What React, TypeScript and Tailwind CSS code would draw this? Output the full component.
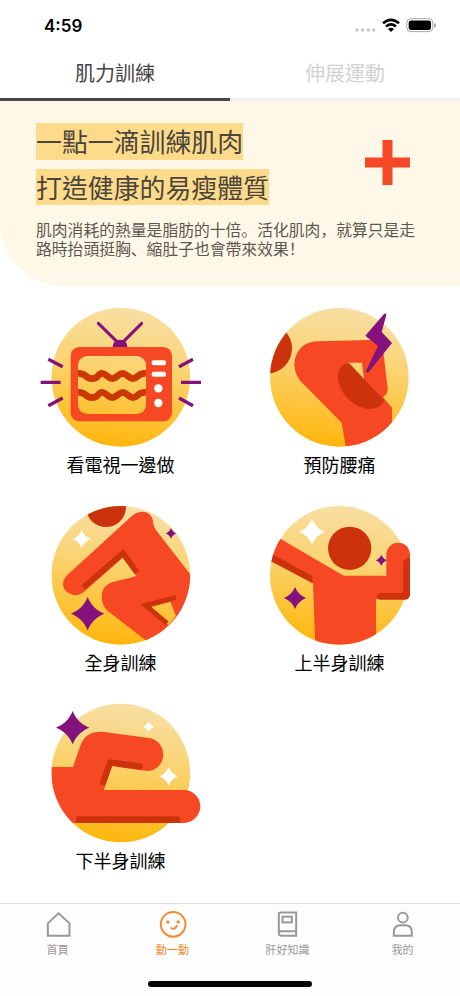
import type { ReactNode } from 'react'

const RED = '#f64822'
const DARK = '#cc330c'
const PURPLE = '#85117c'

type StarProps = { x: number; y: number; r: number; fill: string }

function Star({ x, y, r, fill }: StarProps) {
  return (
    <path
      transform={`translate(${x} ${y}) scale(${r})`}
      fill={fill}
      d="M0 -1C.18 -.55 .5 -.2 1 0C.5 .2 .18 .55 0 1C-.18 .55 -.5 .2 -1 0C-.5 -.2 -.18 -.55 0 -1Z"
    />
  )
}

type SceneProps = {
  id: string
  viewBox: string
  cx: number
  cy: number
  extra?: ReactNode
  clipped?: ReactNode
  children?: ReactNode
}

function Scene({ id, viewBox, cx, cy, extra, clipped, children }: SceneProps) {
  return (
    <svg width="180" height="150" viewBox={viewBox} className="block overflow-visible" fill="none">
      <defs>
        <linearGradient id={`${id}-sun`} gradientUnits="userSpaceOnUse" x1={cx + 25} y1={cy - 208} x2={cx - 25} y2={cy + 208}>
          <stop offset="0" stopColor="#f7dfa4" />
          <stop offset="0.4" stopColor="#fad474" />
          <stop offset="1" stopColor="#ffb60c" />
        </linearGradient>
        <clipPath id={`${id}-clip`}>
          <circle cx={cx} cy={cy} r="208" />
          {extra}
        </clipPath>
      </defs>
      <circle cx={cx} cy={cy} r="208" fill={`url(#${id}-sun)`} />
      <g clipPath={`url(#${id}-clip)`}>{clipped}</g>
      {children}
    </svg>
  )
}

function TvScene() {
  const wave =
    'M144 220C170 218 164 236 186 236S202 220 216 220S233 236 247 236S264 220 278 220S295 236 309 236S322 218 348 220'
  return (
    <Scene id="tv" viewBox="0 0 540 450" cx={272.5} cy={232}>
      <rect x="122" y="141" width="304" height="223" rx="26" fill={RED} />
      <rect x="144" y="168" width="204" height="174" rx="28" fill="url(#tv-sun)" />
      <g stroke="#cc3805" strokeWidth="20">
        <path d={wave} />
        <path d={wave} transform="translate(0 57)" />
      </g>
      <g fill="#fff">
        <rect x="365" y="181" width="43" height="15" rx="6" />
        <rect x="365" y="215" width="43" height="15" rx="6" />
        <circle cx="385" cy="265" r="12.5" />
        <circle cx="385" cy="309" r="12.5" />
      </g>
      <path d="M248 141C248 128 257 119 270 119S292 128 292 141Z" fill={PURPLE} />
      <path d="M205 70L260 124M335 70L281 124" stroke={PURPLE} strokeWidth="9" strokeLinecap="round" />
      <path
        d="M55 178L98 200M32 247H92M55 317L98 294M447 200L489 178M453 247H513M447 294L489 317"
        stroke={PURPLE}
        strokeWidth="10"
      />
    </Scene>
  )
}

function BackScene() {
  return (
    <Scene
      id="back"
      viewBox="-18 0 540 450"
      cx={253}
      cy={232}
      clipped={
        <>
          <circle cx="35" cy="145" r="76" fill={DARK} />
          <path
            d="M190 124L346 120C367 120 382 134 385 155L398 265Q399 281 384 292L411 323V445H273L260 368L140 247C112 217 112 172 135 147C150 130 170 124 190 124Z"
            fill={RED}
          />
        </>
      }
    >
      <path d="M278 188H321L327 237Z" fill="url(#back-sun)" />
      <path d="M283 190C270 187 248 200 249 232C250 280 300 327 345 327C365 327 380 318 388 301L326 236Z" fill={DARK} />
      <path d="M387 42Q393 38 394 45L380 96L411 129L342 215Q335 221 333 213L369 138L331 107Z" fill={PURPLE} />
    </Scene>
  )
}

function BodyScene() {
  return (
    <Scene
      id="body"
      viewBox="0 9 540 450"
      cx={272.5}
      cy={241}
      clipped={
        <>
          <circle cx="228" cy="36" r="60" fill={DARK} />
          <path
            d="M308 61C330 43 364 48 369 78Q369 92 377 104L490 250V420L350 438L236 350C207 325 208 280 240 264C262 256 300 250 319 242L278 188L165 288C150 302 132 304 117 295C95 283 93 258 112 240Z"
            fill={RED}
          />
          <path d="M362 336L421 320L438 362L416 391Z" fill="url(#body-sun)" />
          <path d="M160 277L279 174L321 233" stroke={DARK} strokeWidth="17" />
          <path d="M438 307L347 331L411 385" stroke={DARK} strokeWidth="15" />
        </>
      }
    >
      <Star x={155} y={132} r={27} fill="#fff" />
      <Star x={423} y={115} r={16} fill={PURPLE} />
      <Star x={173} y={356} r={50} fill={PURPLE} />
    </Scene>
  )
}

function UpperScene() {
  return (
    <Scene
      id="upper"
      viewBox="-18 9 540 450"
      cx={253}
      cy={241}
      extra={<rect x="390" y="130" width="90" height="190" />}
      clipped={
        <>
          <path
            d="M77 132L266 242H394V180C394 157 411 143 430 143C449 143 465 157 465 180V295Q465 312 449 312H363V452H181L174 265L30 190L40 110Z"
            fill={RED}
          />
          <path d="M50 176L172 243L173 265L40 193Z" fill={DARK} />
          <path d="M445 196Q455 188 465 188V296Q465 314 449 314H373L363 303L376 294H438Q445 294 445 287Z" fill={DARK} />
        </>
      }
    >
      <circle cx="284" cy="160" r="65" fill={DARK} />
      <Star x={171} y={110} r={39} fill="#fff" />
      <Star x={120} y={309} r={33} fill={PURPLE} />
      <Star x={379} y={196} r={17} fill={PURPLE} />
    </Scene>
  )
}

function LowerScene() {
  return (
    <Scene
      id="lower"
      viewBox="0 3 540 450"
      cx={272.5}
      cy={234}
      extra={<rect x="300" y="280" width="220" height="110" />}
      clipped={
        <>
          <path
            d="M60 216H129L150 155C162 120 185 108 222 111L358 129C385 134 400 155 400 180C398 210 375 229 350 228L247 214L222 285H461C490 285 511 308 511 334S490 384 461 384H60Z"
            fill={RED}
          />
          <path d="M138 384V370Q138 364 144 364H442Q450 364 450 372V384Z" fill={DARK} />
          <path d="M219 262L241 202L329 214" stroke={DARK} strokeWidth="19" strokeLinecap="round" strokeLinejoin="round" />
        </>
      }
    >
      <path d="M247 214L222 285H240L262 216Z" fill="url(#lower-sun)" />
      <Star x={128} y={98} r={50} fill={PURPLE} />
      <Star x={356} y={95} r={17} fill="#fff" />
      <Star x={416} y={244} r={28} fill="#fff" />
    </Scene>
  )
}

const exercises = [
  { label: '看電視一邊做', art: <TvScene /> },
  { label: '預防腰痛', art: <BackScene /> },
  { label: '全身訓練', art: <BodyScene /> },
  { label: '上半身訓練', art: <UpperScene /> },
  { label: '下半身訓練', art: <LowerScene /> },
]

const navItems = [
  {
    label: '首頁',
    viewBox: '127.5 39 90 90',
    icon: <path d="M142 119V82L174 52L207 82V119Z" />,
  },
  {
    label: '動一動',
    active: true,
    viewBox: '472.5 39 90 90',
    icon: (
      <>
        <circle cx="518" cy="85" r="37" />
        <circle cx="502" cy="78" r="5" fill="currentColor" stroke="none" />
        <circle cx="533" cy="78" r="5" fill="currentColor" stroke="none" />
        <path d="M510 95Q518 102 525 97Q529 93 529 87M521 94Q526 93 531 91" strokeWidth="4.5" />
      </>
    ),
  },
  {
    label: '肝好知識',
    viewBox: '127.5 39 90 90',
    icon: (
      <>
        <path d="M197 106V49.500H151Q145 49.500 145 55V112Q145 119 152 119H197V106H152Q145 106 145 112" />
        <rect x="156" y="62" width="28" height="17" />
      </>
    ),
  },
  {
    label: '我的',
    viewBox: '472.5 39 90 90',
    icon: (
      <>
        <circle cx="517" cy="65" r="14.500" />
        <path d="M490 119V110Q490 88 510 88H524Q544 88 544 110V119Z" />
      </>
    ),
  },
]

function StatusBar() {
  return (
    <div className="flex h-[50px] items-start justify-between pl-11 pr-[24px]">
      <span className="mt-[14px] font-['Inter',sans-serif] text-[17px] font-semibold leading-6 text-black">4:59</span>
      <svg width="81" height="16" viewBox="1065 54 243 48" className="mt-[18px] block" fill="none">
        <g fill="#c8c8c8">
          <circle cx="1071" cy="90" r="5.500" />
          <circle cx="1088" cy="90" r="5.500" />
          <circle cx="1105" cy="90" r="5.500" />
          <circle cx="1121" cy="90" r="5.500" />
        </g>
        <path d="M1149 70Q1173 49 1197 70" stroke="#000" strokeWidth="8" />
        <path d="M1158 79.500Q1173 67 1188 79.500" stroke="#000" strokeWidth="7.500" />
        <path d="M1164 87Q1173 80 1182 87L1173 96Z" fill="#000" />
        <rect x="1220.500" y="56" width="78" height="39" rx="12" stroke="#a6a6a6" strokeWidth="3" />
        <rect x="1226" y="61.500" width="67" height="28.500" rx="7" fill="#000" />
        <path d="M1302 69Q1308 71 1308 76T1302 83Z" fill="#a6a6a6" />
      </svg>
    </div>
  )
}

export default function App() {
  return (
    <div className="flex h-[996px] w-[460px] flex-col overflow-hidden bg-white font-['Noto_Sans_CJK_TC',sans-serif]">
      <StatusBar />

      <div className="flex h-[51px] shrink-0 text-center text-[20px] leading-[44px]">
        <button className="flex-1 border-b-[3px] border-[#4d4646] pb-[2px] text-[#444]">肌力訓練</button>
        <button className="flex-1 border-b-[3px] border-[#f0eef1] pb-[2px] text-[#d2d2d2]">伸展運動</button>
      </div>

      <section className="h-[185px] shrink-0 rounded-bl-[64px] bg-[#fff8e9] pl-9 pt-[22px] text-[#4a443c]">
        <div className="flex justify-between pr-[50px]">
          <h1 className="flex flex-col items-start gap-[9px] text-[25.9px] leading-[36.500px]">
            <span className="bg-[#fddb8a]">一點一滴訓練肌肉</span>
            <span className="bg-[#fddb8a]">打造健康的易瘦體質</span>
          </h1>
          <svg width="45" height="45" viewBox="0 0 45 45" className="mt-[17px] block">
            <path d="M17.500 0h10v17.500H45v10H27.500V45h-10V27.500H0v-10h17.500z" fill="#f54826" />
          </svg>
        </div>
        <div className="mt-[15px] w-[400px] font-['Noto_Sans_CJK_SC',sans-serif] text-[15.8px] leading-[19px] text-[#5c574e]">
          <p>肌肉消耗的熱量是脂肪的十倍。活化肌肉，就算只是走</p>
          <p>路時抬頭挺胸、縮肚子也會帶來效果！</p>
        </div>
      </section>

      <main className="grid flex-1 auto-rows-[198px] grid-cols-[180px_180px] content-start gap-x-[39px] pl-[30px] pt-[14px]">
        {exercises.map((item) => (
          <div key={item.label}>
            {item.art}
            <p className="pl-px text-center text-[18px] leading-[28px] text-black">{item.label}</p>
          </div>
        ))}
      </main>

      <nav className="flex h-[93px] shrink-0 flex-col items-center border-t border-[#dedede] bg-[#fdfdfd]">
        <div className="flex w-full pt-[5px]">
          {navItems.map((item) => (
            <div
              key={item.label}
              className={`flex flex-1 flex-col items-center ${item.active ? 'text-[#f58a2c]' : 'text-[#999]'}`}
            >
              <svg width="30" height="30" viewBox={item.viewBox} fill="none" stroke="currentColor" strokeWidth="6">
                {item.icon}
              </svg>
              <span className="mt-[2px] text-[11.1px] leading-4">{item.label}</span>
            </div>
          ))}
        </div>
        <div className="mt-[24px] h-[6px] w-[164px] rounded-full bg-black" />
      </nav>
    </div>
  )
}
